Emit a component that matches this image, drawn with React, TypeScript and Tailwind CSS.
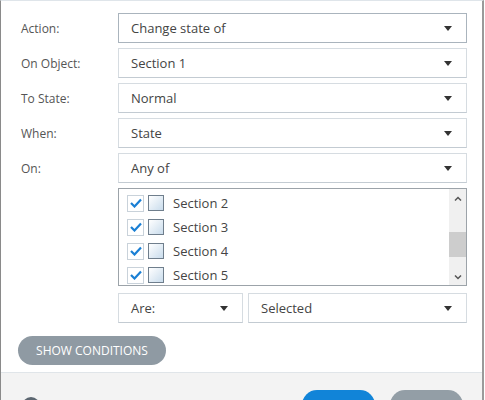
import type { ReactNode } from 'react';

const font = { fontFamily: '"Open Sans", "Noto Sans", sans-serif' };

function Caret() {
  return (
    <svg width="8" height="5" viewBox="0 0 8 5" className="shrink-0">
      <path d="M0 0h8L4 5z" fill="#333" />
    </svg>
  );
}

function Select({ value, focused = false }: { value: string; focused?: boolean }) {
  return (
    <div
      className={`flex h-[30px] items-center justify-between bg-white pl-[12px] pr-[14px] text-[13px] text-[#444] border ${
        focused ? 'border-[#aab4bd]' : 'border-[#d6dce1] border-b-[#c3cbd2]'
      }`}
    >
      <span className="pt-[2px]">{value}</span>
      <Caret />
    </div>
  );
}

function Row({ label, children }: { label: string; children: ReactNode }) {
  return (
    <div className="flex items-center">
      <div className="w-[97px] shrink-0 pt-[1px] text-[12px] text-[#555]">{label}</div>
      <div className="flex-1">{children}</div>
    </div>
  );
}

function CheckItem({ label }: { label: string }) {
  return (
    <div className="flex h-[24px] items-center">
      <div className="flex h-[17px] w-[17px] items-center justify-center border border-[#c9d2da] bg-white">
        <svg width="12" height="10" viewBox="0 0 12 10">
          <path d="M1 5l3.5 3.5L11 1.5" fill="none" stroke="#1a7fd4" strokeWidth="2.2" />
        </svg>
      </div>
      <div className="ml-[4px] h-[16px] w-[16px] border border-[#6f7e8c] bg-gradient-to-br from-white to-[#c9dcec]" />
      <span className="ml-[9px] pt-[1px] text-[13px] text-[#444]">{label}</span>
    </div>
  );
}

export default function App() {
  return (
    <div className="relative h-[400px] w-[485px] overflow-hidden bg-white" style={font}>
      <div className="flex h-[400px] w-[484px] flex-col border-l border-r-2 border-t border-l-[#8a8a8a] border-r-[#9a9a9a] border-t-[#dfe5ea]">
        {/* Form */}
        <div className="flex flex-col gap-[5px] pl-[20px] pr-[15px] pt-[12px]">
          <Row label="Action:">
            <Select value="Change state of" focused />
          </Row>
          <Row label="On Object:">
            <Select value="Section 1" />
          </Row>
          <Row label="To State:">
            <Select value="Normal" />
          </Row>
          <Row label="When:">
            <Select value="State" />
          </Row>
          <Row label="On:">
            <Select value="Any of" />
          </Row>

          <div className="ml-[97px] flex h-[98px] border border-[#9ca3a9] bg-white">
            <div className="flex-1 overflow-hidden pl-[8px] pt-[2px]">
              <CheckItem label="Section 2" />
              <CheckItem label="Section 3" />
              <CheckItem label="Section 4" />
              <CheckItem label="Section 5" />
            </div>
            <div className="flex w-[17px] flex-col items-center bg-[#f0f0f0] pt-[7px]">
              <svg width="8" height="5" viewBox="0 0 8 5">
                <path d="M1 4.5L4 1.5l3 3" fill="none" stroke="#555" strokeWidth="1.5" />
              </svg>
              <div className="mt-[31px] h-[25px] w-full bg-[#cdcdcd]" />
              <svg width="8" height="5" viewBox="0 0 8 5" className="mt-[18px]">
                <path d="M1 0.5L4 3.5l3-3" fill="none" stroke="#555" strokeWidth="1.5" />
              </svg>
            </div>
          </div>

          <div className="ml-[97px] mt-[2px] flex gap-[5px]">
            <div className="w-[125px]">
              <Select value="Are:" />
            </div>
            <div className="flex-1">
              <Select value="Selected" />
            </div>
          </div>
        </div>

        <div className="mt-[13px] pl-[17px]">
          <button className="h-[29px] w-[148px] rounded-full bg-[#8f9aa3] pt-[1px] text-[12px] text-white">
            SHOW CONDITIONS
          </button>
        </div>

        {/* Footer */}
        <div className="mt-[7px] flex flex-1 items-start justify-between border-t border-[#e0e5e9] bg-[#f3f3f3] pl-[21px] pr-[19px]">
          <div className="mt-[24px] h-[18px] w-[18px] rounded-full bg-[#5b6670]" />
          <div className="mt-[17px] flex gap-[15px]">
            <div className="h-[30px] w-[73px] rounded-full bg-[#1184d8]" />
            <div className="h-[30px] w-[73px] rounded-full bg-[#939ea6]" />
          </div>
        </div>
      </div>
    </div>
  );
}
